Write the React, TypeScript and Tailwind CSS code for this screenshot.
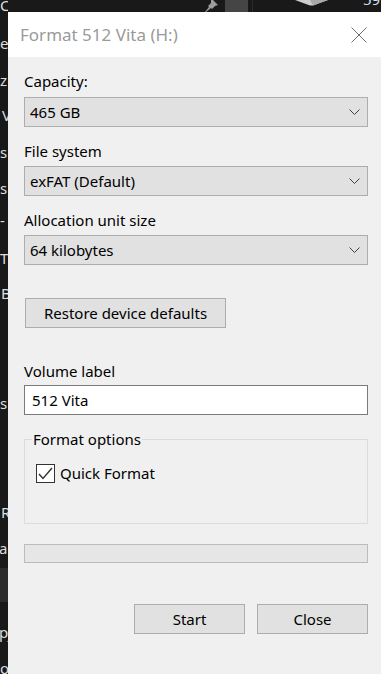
import React from "react";

const font = { fontFamily: '"Noto Sans", "Open Sans", Arial, sans-serif' };

function Chevron() {
  return (
    <svg width="11" height="6" viewBox="0 0 11 6" className="shrink-0">
      <polyline points="0.5,0.5 5.5,5.5 10.5,0.5" fill="none" stroke="#404040" strokeWidth="1" />
    </svg>
  );
}

function Select({ value }: { value: string }) {
  return (
    <div className="flex h-[30px] items-center justify-between border border-[#adadad] bg-[#e1e1e1] pl-[5px] pr-[7px] text-[15px] text-black">
      <span>{value}</span>
      <Chevron />
    </div>
  );
}

function Label({ children }: { children: React.ReactNode }) {
  return <div className="h-[20px] text-[15px] leading-[20px] text-black">{children}</div>;
}

export default function App() {
  return (
    <div className="flex h-[674px] w-[381px] overflow-hidden bg-[#191919]" style={font}>
      {/* left strip (explorer nav pane behind) */}
      <div className="flex w-[8px] shrink-0 flex-col overflow-hidden whitespace-nowrap text-[15px] leading-[20px] text-[#dedede]">
        <div className="mt-[-5px] h-[20px]">C</div>
        <div className="mt-[18px] h-[20px]">e</div>
        <div className="mt-[17px] h-[20px]">z</div>
        <div className="mt-[15px] h-[20px] pl-[2px]">V</div>
        <div className="mt-[17px] h-[20px]">s</div>
        <div className="mt-[16px] h-[20px]">s</div>
        <div className="mt-[12px] h-[20px]">-</div>
        <div className="mt-[18px] h-[20px]">T</div>
        <div className="mt-[15px] h-[20px] pl-[1px]">B</div>
        <div className="mt-[90px] h-[20px]">s</div>
        <div className="mt-[89px] h-[20px] pl-[1px]">R</div>
        <div className="mt-[16px] h-[20px] ml-[-1px]">ac</div>
        <div className="mt-[10px] h-[34px] shrink-0 bg-[#2b2b2b]" />
        <div className="mt-[20px] h-[20px] ml-[-1px]">pj</div>
        <div className="mt-[16px] h-[20px]">o</div>
      </div>

      <div className="flex min-w-0 flex-1 flex-col">
        {/* top strip */}
        <div className="flex h-[12px] shrink-0 items-start overflow-hidden bg-[#191919]">
          <div className="ml-[197px] h-[12px] w-[13px]">
            <svg width="13" height="12" viewBox="0 0 13 12">
              <path d="M6 -2 L13 5 L10 6 L7 9 L6 8 L1 12 L0 12 L4 7 L3 6 L6 3 Z" fill="#9c9c9c" />
            </svg>
          </div>
          <div className="ml-[7px] h-[12px] w-[23px] bg-[#454545]" />
          <div className="ml-[4px] h-[12px] w-[1px] bg-[#2c2c2c]" />
          <div className="ml-[42px] h-[6px] w-[33px]">
            <svg width="33" height="6" viewBox="0 0 33 6">
              <polygon points="0,0 33,0 18,5.5 15,5.5" fill="#cdcdcd" />
              <polygon points="15,0 33,0 18,5.5" fill="#a9a9a9" />
            </svg>
          </div>
          <div className="ml-[35px] mt-[-9px] text-[15px] leading-[16px] text-[#cfe2f3]">59</div>
        </div>

        {/* dialog */}
        <div className="flex flex-1 flex-col">
          {/* title bar */}
          <div className="flex h-[45px] shrink-0 items-center justify-between bg-white pl-[12px] pr-[14px]">
            <span className="text-[17px] text-[#9a9a9a]">Format 512 Vita (H:)</span>
            <svg width="16" height="16" viewBox="0 0 16 16">
              <path d="M0.5 0.5 L15.5 15.5 M15.5 0.5 L0.5 15.5" stroke="#6e6e6e" strokeWidth="1" />
            </svg>
          </div>

          {/* body */}
          <div className="flex flex-1 flex-col bg-[#f0f0f0] pl-[16px] pr-[13px] pt-[14px]">
            <Label>Capacity:</Label>
            <div className="mt-[6px]">
              <Select value="465 GB" />
            </div>

            <div className="mt-[14px]">
              <Label>File system</Label>
            </div>
            <div className="mt-[5px]">
              <Select value="exFAT (Default)" />
            </div>

            <div className="mt-[14px]">
              <Label>Allocation unit size</Label>
            </div>
            <div className="mt-[5px]">
              <Select value="64 kilobytes" />
            </div>

            <div className="mt-[33px] flex">
              <button className="ml-[1px] flex h-[30px] w-[201px] items-center justify-center border border-[#adadad] bg-[#e1e1e1] text-[15px] text-black">
                Restore device defaults
              </button>
            </div>

            <div className="mt-[33px]">
              <Label>Volume label</Label>
            </div>
            <div className="mt-[4px] flex h-[30px] items-center border border-[#7a7a7a] bg-white pl-[7px] text-[15px] text-black">
              512 Vita
            </div>

            <fieldset className="mt-[14px] h-[95px] border border-[#dcdcdc] p-0">
              <legend className="ml-[7px] px-[1px] text-[15px] leading-[20px] text-black">Format options</legend>
              <div className="mt-[14px] flex items-center pl-[11px]">
                <svg width="19" height="19" viewBox="0 0 19 19" className="shrink-0">
                  <rect x="0.5" y="0.5" width="18" height="18" fill="#fff" stroke="#333" strokeWidth="1" />
                  <polyline points="3,10 7,14.5 16,4" fill="none" stroke="#333" strokeWidth="1.4" />
                </svg>
                <span className="ml-[5px] text-[15px] leading-[20px] text-black">Quick Format</span>
              </div>
            </fieldset>

            <div className="mt-[20px] h-[19px] border border-[#bcbcbc] bg-[#e6e6e6]" />

            <div className="mt-[41px] flex justify-end gap-[12px]">
              <button className="flex h-[30px] w-[111px] items-center justify-center border border-[#adadad] bg-[#e1e1e1] text-[15px] text-black">
                Start
              </button>
              <button className="flex h-[30px] w-[111px] items-center justify-center border border-[#adadad] bg-[#e1e1e1] text-[15px] text-black">
                Close
              </button>
            </div>
          </div>
        </div>
      </div>
    </div>
  );
}
